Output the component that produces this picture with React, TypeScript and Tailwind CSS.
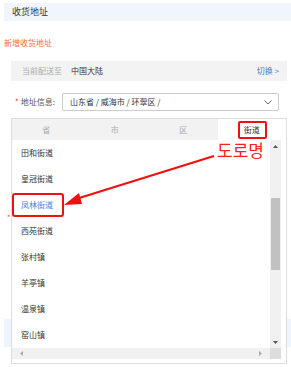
import React from "react";

const items = ["田和街道", "皇冠街道", "凤林街道", "西苑街道", "张村镇", "羊亭镇", "温泉镇", "窑山镇"];

export default function App() {
  return (
    <div
      className="relative w-[291px] h-[367px] overflow-hidden bg-white"
      style={{ fontFamily: '"Noto Sans CJK SC", "Noto Sans", sans-serif' }}
    >
      {/* header */}
      <div className="mt-[3px] ml-[4px] h-[18px] bg-[#f1f6fc] flex items-center pl-[8px] text-[9px] text-[#333]">
        收货地址
      </div>
      <div className="mt-[17px] ml-[4px] h-[10px] flex items-center text-[8px] text-[#ff6a3c]">新增收货地址</div>

      {/* delivery region */}
      <div className="mt-[13px] ml-[11px] w-[276px] h-[20px] bg-[#f3f3f3] flex items-center pl-[11px] pr-[8px] text-[8px]">
        <span className="text-[#aaa]">当前配送至</span>
        <span className="ml-[9px] text-[#333]">中国大陆</span>
        <span className="ml-auto text-[#3d7fd6]">切换 &gt;</span>
      </div>

      {/* address row */}
      <div className="mt-[12px] flex items-center h-[18px]">
        <div className="ml-[15px] w-[47px] flex items-center text-[8px] text-[#555]">
          <span className="text-[#f33] mr-[2px]">*</span>
          <span>地址信息:</span>
        </div>
        <div className="w-[217px] h-[18px] border border-[#ccc] rounded-[2px] flex items-center pl-[7px] pr-[6px] text-[8px] text-[#333]">
          <span>山东省 / 威海市 / 环翠区 /</span>
          <svg className="ml-auto" width="8" height="5" viewBox="0 0 8 5">
            <path d="M0.5 0.5 L4 4 L7.5 0.5" fill="none" stroke="#666" strokeWidth="1" />
          </svg>
        </div>
      </div>

      {/* background form remnants */}
      <div className="mt-[104px] ml-[7px] h-[4px] text-[7px] leading-[4px] text-[#f33]">*</div>
      <div className="mt-[100px] ml-[4px] h-[28px] bg-[#eef5fd]"></div>

      {/* dropdown panel */}
      <div className="absolute left-[11px] top-[118px] w-[276px] h-[246px] border border-[#ddd] bg-white flex flex-col">
        <div className="h-[23px] flex text-[8px]">
          <div className="flex-1 bg-[#f2f2f2] text-[#aaa] flex items-center justify-center">省</div>
          <div className="flex-1 bg-[#f2f2f2] text-[#aaa] flex items-center justify-center">市</div>
          <div className="flex-1 bg-[#f2f2f2] text-[#aaa] flex items-center justify-center">区</div>
          <div className="flex-1 bg-white text-[#333] flex items-center justify-center">街道</div>
        </div>
        <div className="flex-1 flex flex-col w-[269px] pb-[4px]">
          <div className="flex flex-1 min-h-0">
            <div className="flex-1 flex flex-col overflow-hidden">
              {items.map((t, i) => (
                <div
                  key={t}
                  className={
                    "h-[26px] shrink-0 flex items-center pl-[9px] text-[8px] " +
                    (i === 2 ? "text-[#4d7ef0]" : "text-[#333]")
                  }
                >
                  {t}
                </div>
              ))}
            </div>
            <div className="w-[11px] bg-[#f1f1f1] flex flex-col items-center">
              <svg className="mt-[5px]" width="5" height="3" viewBox="0 0 5 3">
                <path d="M0 3 L2.5 0 L5 3 Z" fill="#555" />
              </svg>
              <div className="mt-[50px] w-[9px] h-[72px] bg-[#c1c1c1]"></div>
              <svg className="mt-auto mb-[4px]" width="5" height="3" viewBox="0 0 5 3">
                <path d="M0 0 L2.5 3 L5 0 Z" fill="#555" />
              </svg>
            </div>
          </div>
          <div className="h-[11px] flex">
            <div className="flex-1 bg-[#f1f1f1] flex items-center px-[8px]">
              <svg width="3" height="5" viewBox="0 0 3 5">
                <path d="M3 0 L0 2.5 L3 5 Z" fill="#aaa" />
              </svg>
              <svg className="ml-auto" width="3" height="5" viewBox="0 0 3 5">
                <path d="M0 0 L3 2.5 L0 5 Z" fill="#aaa" />
              </svg>
            </div>
            <div className="w-[11px] bg-[#dcdcdc]"></div>
          </div>
        </div>
      </div>

      {/* annotations */}
      <div className="absolute left-[238px] top-[121px] w-[29px] h-[18px] border-2 border-[#f01010] rounded-[2px]"></div>
      <div className="absolute left-[12px] top-[193px] w-[52px] h-[24px] border-2 border-[#f01010] rounded-[3px]"></div>
      <div
        className="absolute left-[217px] top-[138px] text-[17px] leading-[24px] text-[#ff2020]"
        style={{ fontFamily: '"Noto Sans CJK KR", sans-serif' }}
      >
        도로명
      </div>
      <svg className="absolute left-0 top-0" width="291" height="367" viewBox="0 0 291 367">
        <line x1="214" y1="156" x2="76" y2="199" stroke="#f01010" strokeWidth="2.2" />
        <polygon points="64,205 79,193 82,204" fill="#f01010" />
      </svg>
    </div>
  );
}
